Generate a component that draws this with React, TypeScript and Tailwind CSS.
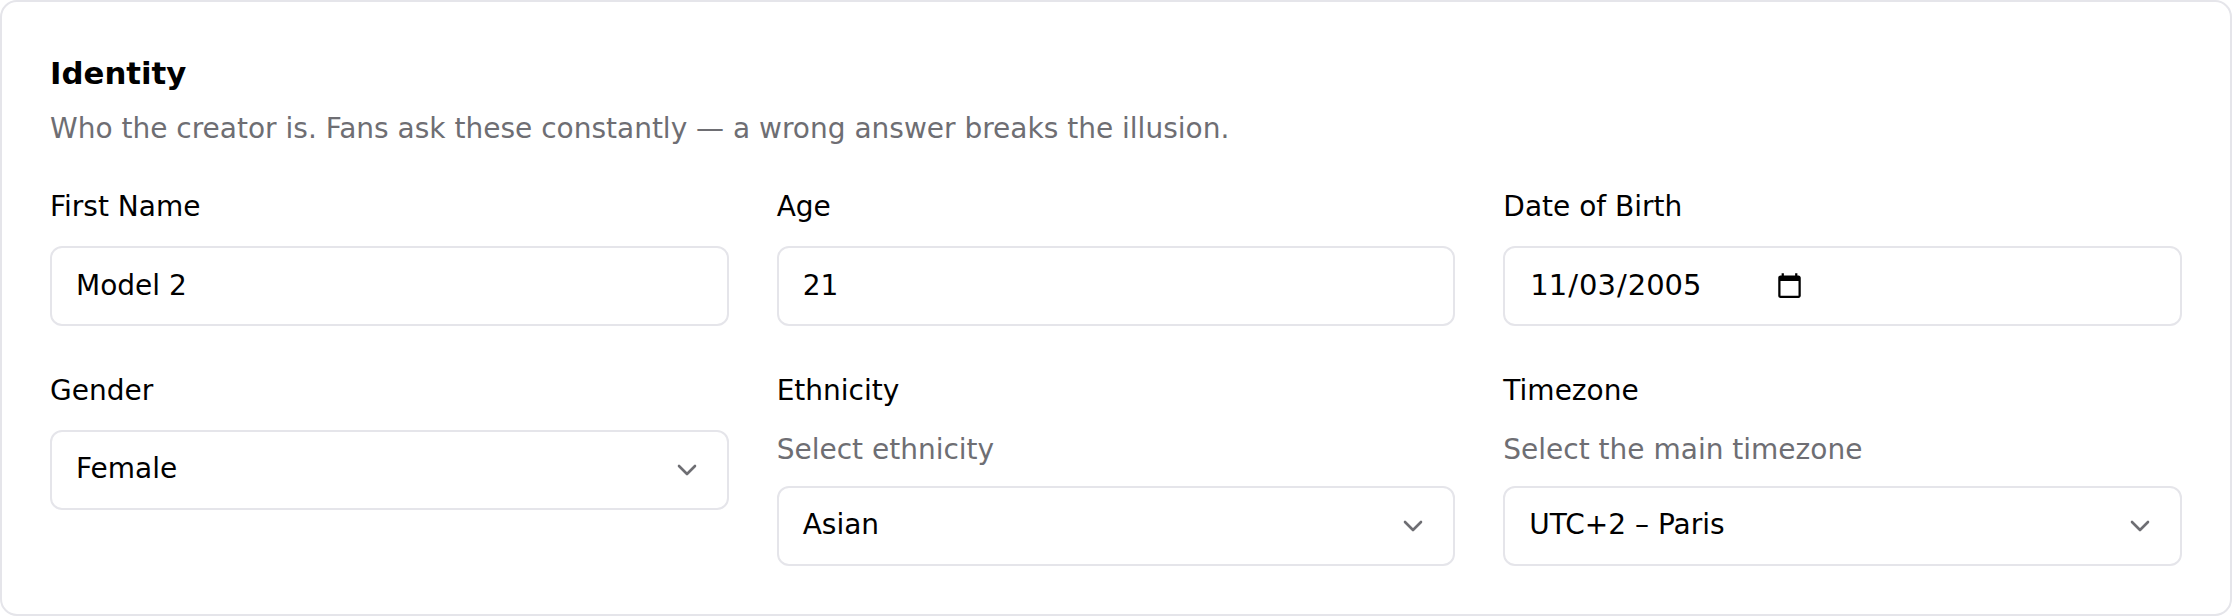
const inputCls = "h-[80px] w-full rounded-[12px] border-2 border-[#e5e5ea] bg-white pl-[24px] flex items-center text-[28px] text-black";
const labelCls = "text-[28px] leading-[40px] text-black";
const hintCls = "text-[28px] leading-[40px] text-[#6e6e73]";
const Chevron = () => (
  <svg width="24" height="24" viewBox="0 0 24 24" fill="none" stroke="#6e6e73" strokeWidth="2.6" strokeLinecap="round" strokeLinejoin="round"><path d="M4 8l8 8 8-8" /></svg>
);
const Select = ({ v }: { v: string }) => (
  <div className={inputCls + " justify-between pr-[28px]"}><span className="mb-[2px]">{v}</span><Chevron /></div>
);
export default function App() {
  return (
    <div className="h-[616px] w-[2232px] bg-white font-['DejaVu_Sans',sans-serif]">
      <div className="h-[616px] rounded-[17px] border-2 border-[#e5e5ea] px-[48px] pt-[49px]">
        <h2 className="text-[30.8px] leading-[44px] font-bold text-black">Identity</h2>
        <p className="mt-[12px] text-[28px] leading-[44px] text-[#6e6e73]">Who the creator is. Fans ask these constantly — a wrong answer breaks the illusion.</p>
        <div className="mt-[36px] grid grid-cols-3 gap-x-[48px] gap-y-[45px]">
          <div className="flex flex-col gap-[19px]"><div className={labelCls}>First Name</div><div className={inputCls}>Model 2</div></div>
          <div className="flex flex-col gap-[19px]"><div className={labelCls}>Age</div><div className={inputCls}>21</div></div>
          <div className="flex flex-col gap-[19px]"><div className={labelCls}>Date of Birth</div><div className={inputCls}><input type="date" defaultValue="2005-11-03" className="w-[277px] bg-transparent outline-none text-[29px] text-black" /></div></div>
          <div className="flex flex-col gap-[19px]"><div className={labelCls}>Gender</div><Select v="Female" /></div>
          <div className="flex flex-col gap-[19px]"><div className={labelCls}>Ethnicity</div><div className="flex flex-col gap-[16px]"><div className={hintCls}>Select ethnicity</div><Select v="Asian" /></div></div>
          <div className="flex flex-col gap-[19px]"><div className={labelCls}>Timezone</div><div className="flex flex-col gap-[16px]"><div className={hintCls}>Select the main timezone</div><Select v="UTC+2 – Paris" /></div></div>
        </div>
      </div>
    </div>
  );
}
